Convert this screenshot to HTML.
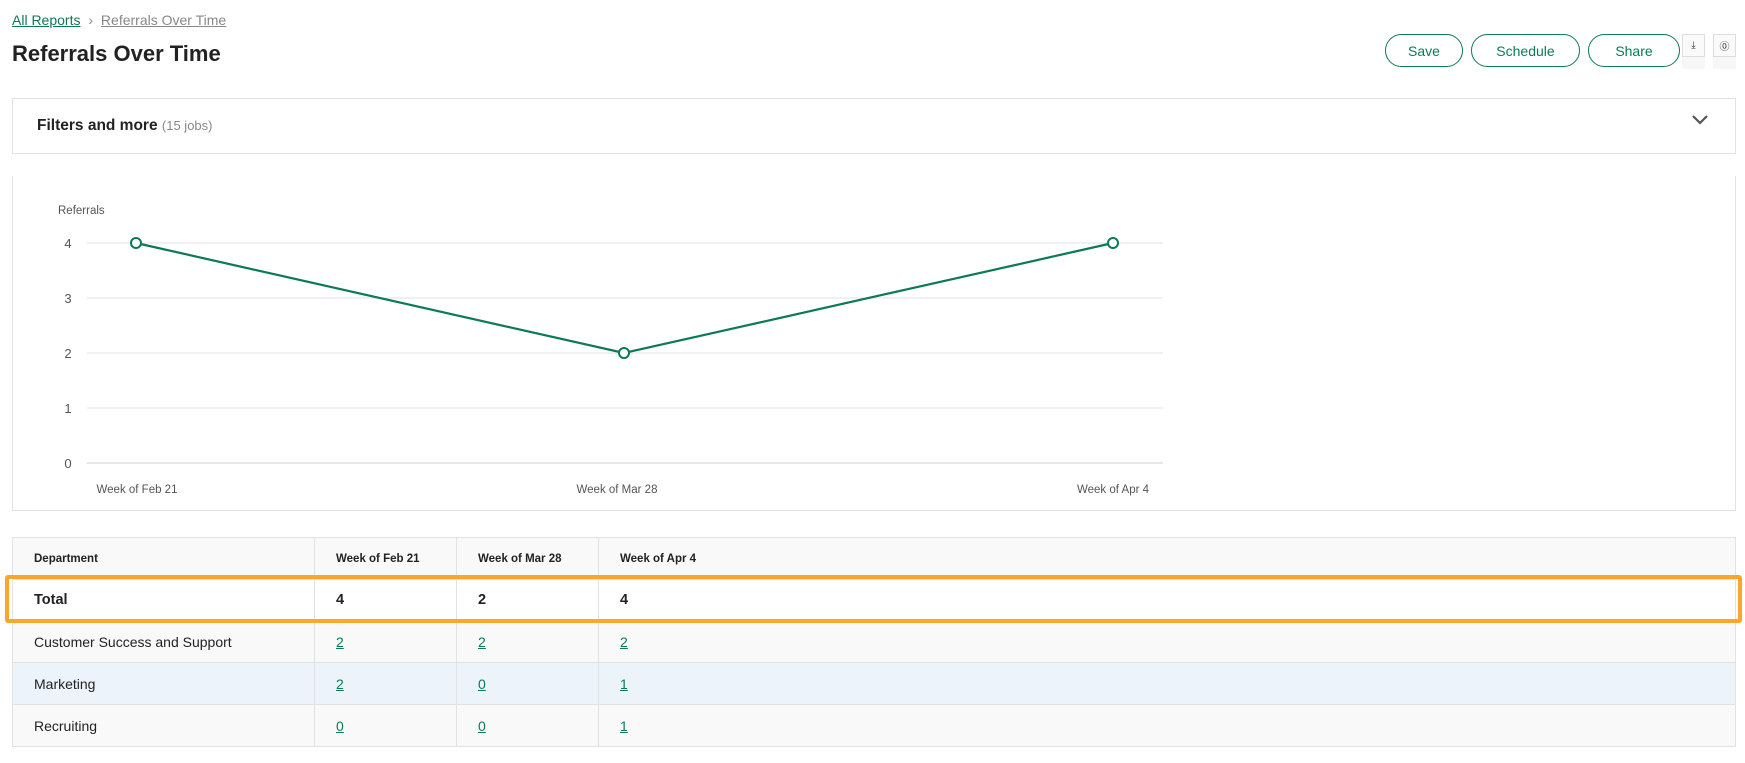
<!DOCTYPE html>
<html><head><style>
body{margin:0;width:1745px;height:763px;background:#fff;font-family:"Liberation Sans",sans-serif;color:#222;position:relative;overflow:hidden}
.a{position:absolute}
.bc{left:12px;top:12px;font-size:14px}
.bc a{color:#0b7a55;text-decoration:underline}
.bc span{color:#888}
.bc .cur{text-decoration:underline;color:#888}
h1{position:absolute;left:12px;top:41px;margin:0;font-size:22px;font-weight:bold;color:#222}
.btn{position:absolute;top:34px;height:33px;border:1.5px solid #0b7a55;border-radius:17px;box-sizing:border-box;color:#0b7a55;font-size:14px;display:flex;align-items:center;justify-content:center}
.ib{position:absolute;top:34px;width:23px;height:23px;border:1px solid #ddd;box-sizing:border-box;background:#fafafa;font-size:10px;display:flex;align-items:center;justify-content:center;color:#333}
.ibs{position:absolute;top:57px;width:23px;height:12px;background:#f7f7f7}
.panel{position:absolute;left:12px;width:1724px;border:1px solid #e2e2e2;box-sizing:border-box}
table{position:absolute;left:12px;top:537px;width:1724px;border-collapse:collapse;font-size:14px}
td{border:1px solid #e2e2e2;padding:0 0 0 21px;background:#f9f9f9;height:41px}
tr.h td{font-size:11.5px;font-weight:bold;height:41px}
tr.t td{background:#fff;font-weight:bold;font-size:14.5px;height:40px}
tr.m td{background:#ecf3fa}
td a{color:#0b7a55;text-decoration:underline}
</style></head><body>
<div class="a bc"><a>All Reports</a> <span style="margin:0 4px">›</span> <span class="cur">Referrals Over Time</span></div>
<h1>Referrals Over Time</h1>
<div class="btn" style="left:1385px;width:78px">Save</div>
<div class="btn" style="left:1471px;width:109px">Schedule</div>
<div class="btn" style="left:1588px;width:92px">Share</div>
<div class="ib" style="left:1682px">⤓</div><div class="ibs" style="left:1682px"></div>
<div class="ib" style="left:1713px">⓪</div><div class="ibs" style="left:1713px"></div>
<div class="panel" style="top:98px;height:56px"></div>
<div class="a" style="left:37px;top:117px;font-size:15.5px;font-weight:bold">Filters and more <span style="font-weight:normal;color:#888;font-size:13px">(15 jobs)</span></div>
<svg class="a" style="left:1690px;top:113px" width="20" height="14"><path d="M3 3l7 7 7-7" stroke="#555" stroke-width="2.2" fill="none"/></svg>
<div class="panel" style="top:176px;height:335px;border-top:none"></div>
<svg class="a" style="left:0;top:0" width="1745" height="520" font-family="Liberation Sans" font-size="12" fill="#555">
<text x="58" y="214" font-size="11.5">Referrals</text>
<g stroke="#e2e2e2"><line x1="87" x2="1163" y1="243" y2="243"/><line x1="87" x2="1163" y1="298" y2="298"/><line x1="87" x2="1163" y1="353" y2="353"/><line x1="87" x2="1163" y1="408" y2="408"/><line x1="87" x2="1163" y1="463" y2="463" stroke="#ccc"/></g>
<g text-anchor="middle" font-size="13"><text x="68" y="248">4</text><text x="68" y="303">3</text><text x="68" y="358">2</text><text x="68" y="413">1</text><text x="68" y="468">0</text></g>
<polyline points="136,243 624,353 1113,243" stroke="#0b7a55" stroke-width="2.2" fill="none"/>
<g fill="#fff" stroke="#0b7a55" stroke-width="2"><circle cx="136" cy="243" r="5"/><circle cx="624" cy="353" r="5"/><circle cx="1113" cy="243" r="5"/></g>
<g text-anchor="middle" font-size="11.5"><text x="137" y="493">Week of Feb 21</text><text x="617" y="493">Week of Mar 28</text><text x="1113" y="493">Week of Apr 4</text></g>
</svg>
<table>
<tr class="h"><td style="width:280px">Department</td><td style="width:120px">Week of Feb 21</td><td style="width:120px">Week of Mar 28</td><td>Week of Apr 4</td></tr>
<tr class="t"><td>Total</td><td>4</td><td>2</td><td>4</td></tr>
<tr><td>Customer Success and Support</td><td><a>2</a></td><td><a>2</a></td><td><a>2</a></td></tr>
<tr class="m"><td>Marketing</td><td><a>2</a></td><td><a>0</a></td><td><a>1</a></td></tr>
<tr><td>Recruiting</td><td><a>0</a></td><td><a>0</a></td><td><a>1</a></td></tr>
</table>
<div class="a" style="left:5px;top:575px;width:1737px;height:48px;border:4px solid #ffa52c;border-radius:3px;box-sizing:border-box"></div>
</body></html>
